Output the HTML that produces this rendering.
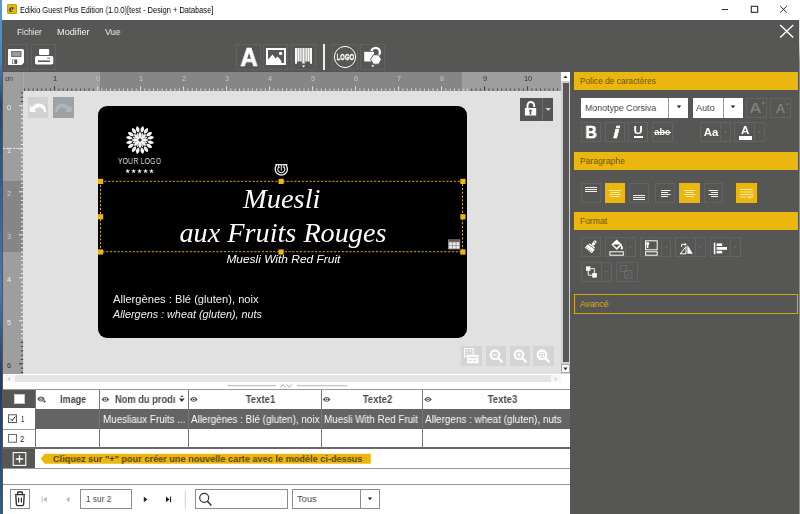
<!DOCTYPE html>
<html>
<head>
<meta charset="utf-8">
<title>Edikio Guest Plus Edition</title>
<style>
*{box-sizing:border-box;margin:0;padding:0}
html,body{width:800px;height:514px;overflow:hidden}
body{position:relative;background:#fff;font-family:"Liberation Sans",sans-serif;font-size:10px;color:#222}
.a{position:absolute}
.t{position:absolute;white-space:nowrap;line-height:1;will-change:transform}
svg{position:absolute;overflow:visible}
.tb{position:absolute;border:1px solid #616161}
.pb{position:absolute;border:1px solid #636363}
.pb.y{background:#ebb60e;border-color:#ebb60e}
.dv{position:absolute;width:1px;background:#636363}
.vl{position:absolute;width:1px;background:#7a7a7a}
.hl{position:absolute;height:1px;background:#8a8a8a}
.cb{position:absolute;background:#fff;border:1px solid #555}
.wb{position:absolute;background:#fff;border:1px solid #8c8c8c}

</style>
</head>
<body>
<div class="a" style="left:0px;top:0px;width:2px;height:514px;background:linear-gradient(#4f9bd8 0,#3f8ac9 60px,#1f4676 105px,#2a5f9c 180px,#3c7cc0 290px,#1d3c68 380px,#2c5e98 514px)"></div>
<div class="a" style="left:798.5px;top:0px;width:1.5px;height:514px;background:linear-gradient(#fff 0,#fff 19px,#dde5ee 20px,#cfdcea 45px,#5b9bd5 62px,#5b9bd5 514px)"></div>
<div class="a" style="left:2px;top:19.5px;width:796.5px;height:494.5px;background:#565655"></div>
<div class="a" style="left:6.5px;top:4px;width:10.5px;height:10px;background:#e3b51d;border:1px solid #c99d12;border-radius:1px"></div>
<div class="t" style="font-size:11px;color:#3b2d06;font-family:'Liberation Serif',serif;font-weight:bold;font-style:italic;left:9.25px;top:3.19px;">e</div>
<div class="t" style="font-size:8.6px;color:#000;left:20.40px;top:5.52px;transform:scaleX(0.8652);transform-origin:left center;">Edikio Guest Plus Edition (1.0.0)[test - Design + Database]</div>
<svg style="left:715px;top:0px" width="80" height="19" viewBox="0 0 80 19" ><path d="M6.7 9.5H13" stroke="#2a2a2a" stroke-width="1" fill="none"/><rect x="36.3" y="6.3" width="6.4" height="6" stroke="#2a2a2a" stroke-width="1.1" fill="none"/><path d="M65.2 6.1l6.6 6.4M71.8 6.1l-6.6 6.4" stroke="#2a2a2a" stroke-width="1" fill="none"/></svg>
<div class="t" style="font-size:9.2px;color:#f2f2f2;left:16.60px;top:27.91px;transform:scaleX(0.8993);transform-origin:left center;">Fichier</div>
<div class="t" style="font-size:9.2px;color:#f2f2f2;left:56.90px;top:27.91px;">Modifier</div>
<div class="t" style="font-size:9.2px;color:#f2f2f2;left:105.30px;top:27.91px;transform:scaleX(0.9553);transform-origin:left center;">Vue</div>
<svg style="left:778px;top:22px" width="18" height="18" viewBox="0 0 18 18" ><path d="M2.2 2.9l13 12.5M15.2 2.9L2.2 15.4" stroke="#fff" stroke-width="1.4" fill="none"/></svg>
<div class="tb" style="left:5.2px;top:44px;width:23.2px;height:26px;"></div>
<div class="tb" style="left:31px;top:44px;width:25.2px;height:26px;"></div>
<div class="tb" style="left:235.6px;top:44px;width:25px;height:26px;"></div>
<div class="tb" style="left:263.2px;top:44px;width:25.3px;height:26px;"></div>
<div class="tb" style="left:291.3px;top:44px;width:25.2px;height:26px;"></div>
<div class="tb" style="left:332px;top:44px;width:26px;height:26px;"></div>
<div class="tb" style="left:359.5px;top:44px;width:25.5px;height:26px;"></div>
<svg style="left:8px;top:48.7px" width="16" height="16" viewBox="0 0 16 16" ><path d="M0.8 0H14.5Q16 0 16 1.5V13.5L13.5 16H0.8Q0 16 0 15.2V0.8Q0 0 0.8 0Z" fill="#fff"/><rect x="3.6" y="2.4" width="9.4" height="5.2" fill="#9a9a9a" stroke="#5d5d5d" stroke-width="0.8"/><rect x="4" y="10.6" width="5.2" height="4.2" fill="#4a4a4a"/><rect x="4.6" y="11" width="1.8" height="3.6" fill="#fff"/></svg>
<svg style="left:35px;top:48.7px" width="19" height="16" viewBox="0 0 19 16" ><rect x="4" y="0" width="10.2" height="6" rx="0.8" fill="#fff"/><rect x="0" y="7" width="18.3" height="8.4" rx="1.6" fill="#fff"/><rect x="3" y="11.4" width="12" height="1.6" fill="#5a5a5a"/><rect x="12.2" y="8.6" width="3" height="1" fill="#6a6a6a"/></svg>
<div class="t" style="font-size:25px;color:#fff;font-weight:bold;left:239.67px;top:45.24px;transform:scaleX(0.9522);transform-origin:center center;-webkit-text-stroke:0.7px #fff;">A</div>
<svg style="left:266px;top:48px" width="20" height="17" viewBox="0 0 20 17" ><rect x="1" y="1" width="18" height="15" fill="none" stroke="#fff" stroke-width="2"/><path d="M2 15V11.5L6.5 6.5L9.6 10.4L11.6 8.4L15.5 13V15Z" fill="#fff"/><circle cx="14.6" cy="5.4" r="1.7" fill="#fff"/></svg>
<svg style="left:295px;top:48px" width="17" height="20" viewBox="0 0 17 20" ><path d="M0 0H17V15.8H15V13.4H10.2V15.6H6.8V13.4H2V15.8H0Z" fill="#f6f6f6"/><path d="M2.4 0V15.6" stroke="#565655" stroke-width="0.55" opacity="0.75"/><path d="M4.6 0V15.6" stroke="#565655" stroke-width="0.55" opacity="0.75"/><path d="M6.2 0V15.6" stroke="#565655" stroke-width="0.55" opacity="0.75"/><path d="M7.6 0V15.6" stroke="#565655" stroke-width="0.55" opacity="0.75"/><path d="M9.4 0V15.6" stroke="#565655" stroke-width="0.55" opacity="0.75"/><path d="M10.8 0V15.6" stroke="#565655" stroke-width="0.55" opacity="0.75"/><path d="M12.4 0V15.6" stroke="#565655" stroke-width="0.55" opacity="0.75"/><path d="M14.6 0V15.6" stroke="#565655" stroke-width="0.55" opacity="0.75"/><path d="M6.9 17.4H10.3L8.6 19.6Z" fill="#fff"/></svg>
<div class="a" style="left:323.3px;top:44px;width:1.7px;height:25.5px;background:#ececec"></div>
<svg style="left:332px;top:44px" width="26" height="26" viewBox="0 0 26 26" ><circle cx="13" cy="13" r="10.6" fill="none" stroke="#fff" stroke-width="1"/></svg>
<div class="t" style="font-size:8.4px;color:#fff;font-weight:bold;left:332.66px;top:52.99px;transform:scaleX(0.6972);transform-origin:center center;-webkit-text-stroke:0.35px #fff;">LOGO</div>
<svg style="left:360px;top:44px" width="26" height="26" viewBox="0 0 26 26" ><rect x="4.2" y="7.8" width="9.8" height="9.7" fill="#fff"/><circle cx="15.6" cy="8.2" r="4.3" fill="none" stroke="#fff" stroke-width="2.4"/><rect x="3.4" y="7" width="11.4" height="11.4" fill="#565655"/><rect x="4.2" y="7.8" width="9.8" height="9.7" fill="#fff"/><path d="M10.6 15.5L13.3 10.8H18.7L21.4 15.5L18.7 20.2H13.3Z" fill="#fff" stroke="#565655" stroke-width="1"/><path d="M11.2 21.2H14.4L12.8 23.2Z" fill="#fff"/></svg>
<div class="a" style="left:2.6px;top:71.8px;width:558.4px;height:18.8px;background:#9e9e9e"></div>
<div class="a" style="left:100px;top:71.8px;width:362px;height:18.8px;background:#868686"></div>
<div class="a" style="left:2.6px;top:90.6px;width:20.6px;height:283.4px;background:#9e9e9e"></div>
<div class="a" style="left:2.6px;top:181px;width:20.6px;height:71px;background:#868686"></div>
<div class="a" style="left:23.2px;top:90.6px;width:537.8px;height:283.4px;background:#e1e1e1"></div>
<div class="a" style="left:23px;top:71.8px;width:0.6px;height:18.8px;background:#a8a8a8"></div>
<div class="t" style="font-size:7.6px;color:#3c3c3c;left:5.20px;top:74.97px;transform:scaleX(0.7704);transform-origin:left center;">cm</div>
<svg style="left:0px;top:0px" width="800" height="514" viewBox="0 0 800 514" shape-rendering="auto"><path d="M24.50 88.60V90.6M28.80 88.60V90.6M33.10 88.60V90.6M37.40 88.60V90.6M41.70 88.60V90.6M46.00 88.60V90.6M50.30 88.60V90.6M54.60 86.40V90.6M58.90 88.60V90.6M63.20 88.60V90.6M67.50 88.60V90.6M71.80 88.60V90.6M76.10 88.60V90.6M80.40 88.60V90.6M84.70 88.60V90.6M89.00 88.60V90.6M93.30 88.60V90.6M471.70 88.60V90.6M476.00 88.60V90.6M480.30 88.60V90.6M484.60 86.40V90.6M488.90 88.60V90.6M493.20 88.60V90.6M497.50 88.60V90.6M501.80 88.60V90.6M506.10 88.60V90.6M510.40 88.60V90.6M514.70 88.60V90.6M519.00 88.60V90.6M523.30 88.60V90.6M527.60 86.40V90.6M531.90 88.60V90.6M536.20 88.60V90.6M540.50 88.60V90.6M544.80 88.60V90.6M549.10 88.60V90.6M553.40 88.60V90.6M557.70 88.60V90.6" stroke="#3a3a3a" stroke-width="1" fill="none"/><path d="M97.60 86.40V90.6M101.90 88.60V90.6M106.20 88.60V90.6M110.50 88.60V90.6M114.80 88.60V90.6M119.10 88.60V90.6M123.40 88.60V90.6M127.70 88.60V90.6M132.00 88.60V90.6M136.30 88.60V90.6M140.60 86.40V90.6M144.90 88.60V90.6M149.20 88.60V90.6M153.50 88.60V90.6M157.80 88.60V90.6M162.10 88.60V90.6M166.40 88.60V90.6M170.70 88.60V90.6M175.00 88.60V90.6M179.30 88.60V90.6M183.60 86.40V90.6M187.90 88.60V90.6M192.20 88.60V90.6M196.50 88.60V90.6M200.80 88.60V90.6M205.10 88.60V90.6M209.40 88.60V90.6M213.70 88.60V90.6M218.00 88.60V90.6M222.30 88.60V90.6M226.60 86.40V90.6M230.90 88.60V90.6M235.20 88.60V90.6M239.50 88.60V90.6M243.80 88.60V90.6M248.10 88.60V90.6M252.40 88.60V90.6M256.70 88.60V90.6M261.00 88.60V90.6M265.30 88.60V90.6M269.60 86.40V90.6M273.90 88.60V90.6M278.20 88.60V90.6M282.50 88.60V90.6M286.80 88.60V90.6M291.10 88.60V90.6M295.40 88.60V90.6M299.70 88.60V90.6M304.00 88.60V90.6M308.30 88.60V90.6M312.60 86.40V90.6M316.90 88.60V90.6M321.20 88.60V90.6M325.50 88.60V90.6M329.80 88.60V90.6M334.10 88.60V90.6M338.40 88.60V90.6M342.70 88.60V90.6M347.00 88.60V90.6M351.30 88.60V90.6M355.60 86.40V90.6M359.90 88.60V90.6M364.20 88.60V90.6M368.50 88.60V90.6M372.80 88.60V90.6M377.10 88.60V90.6M381.40 88.60V90.6M385.70 88.60V90.6M390.00 88.60V90.6M394.30 88.60V90.6M398.60 86.40V90.6M402.90 88.60V90.6M407.20 88.60V90.6M411.50 88.60V90.6M415.80 88.60V90.6M420.10 88.60V90.6M424.40 88.60V90.6M428.70 88.60V90.6M433.00 88.60V90.6M437.30 88.60V90.6M441.60 86.40V90.6M445.90 88.60V90.6M450.20 88.60V90.6M454.50 88.60V90.6M458.80 88.60V90.6M463.10 88.60V90.6M467.40 88.60V90.6" stroke="#e4e4e4" stroke-width="1" fill="none"/></svg>
<div class="t" style="font-size:7.4px;color:#333;left:53.04px;top:75.14px;">1</div>
<div class="t" style="font-size:7.4px;color:#c6c6c6;left:96.04px;top:75.14px;">0</div>
<div class="t" style="font-size:7.4px;color:#c6c6c6;left:139.04px;top:75.14px;">1</div>
<div class="t" style="font-size:7.4px;color:#c6c6c6;left:182.04px;top:75.14px;">2</div>
<div class="t" style="font-size:7.4px;color:#c6c6c6;left:225.04px;top:75.14px;">3</div>
<div class="t" style="font-size:7.4px;color:#c6c6c6;left:268.04px;top:75.14px;">4</div>
<div class="t" style="font-size:7.4px;color:#c6c6c6;left:311.04px;top:75.14px;">5</div>
<div class="t" style="font-size:7.4px;color:#c6c6c6;left:354.04px;top:75.14px;">6</div>
<div class="t" style="font-size:7.4px;color:#c6c6c6;left:397.04px;top:75.14px;">7</div>
<div class="t" style="font-size:7.4px;color:#c6c6c6;left:440.04px;top:75.14px;">8</div>
<div class="t" style="font-size:7.4px;color:#333;left:483.04px;top:75.14px;">9</div>
<div class="t" style="font-size:7.4px;color:#333;left:523.98px;top:75.14px;">10</div>
<svg style="left:0px;top:0px" width="800" height="514" viewBox="0 0 800 514" ><path d="M20.90 92.90H23.2M20.90 97.20H23.2M20.90 101.50H23.2M20.90 342.30H23.2M20.90 346.60H23.2M20.90 350.90H23.2M20.90 355.20H23.2M20.90 359.50H23.2M19.00 363.80H23.2M20.90 368.10H23.2M20.90 372.40H23.2" stroke="#3a3a3a" stroke-width="1" fill="none"/><path d="M19.00 105.80H23.2M20.90 110.10H23.2M20.90 114.40H23.2M20.90 118.70H23.2M20.90 123.00H23.2M20.90 127.30H23.2M20.90 131.60H23.2M20.90 135.90H23.2M20.90 140.20H23.2M20.90 144.50H23.2M19.00 148.80H23.2M20.90 153.10H23.2M20.90 157.40H23.2M20.90 161.70H23.2M20.90 166.00H23.2M20.90 170.30H23.2M20.90 174.60H23.2M20.90 178.90H23.2M20.90 183.20H23.2M20.90 187.50H23.2M19.00 191.80H23.2M20.90 196.10H23.2M20.90 200.40H23.2M20.90 204.70H23.2M20.90 209.00H23.2M20.90 213.30H23.2M20.90 217.60H23.2M20.90 221.90H23.2M20.90 226.20H23.2M20.90 230.50H23.2M19.00 234.80H23.2M20.90 239.10H23.2M20.90 243.40H23.2M20.90 247.70H23.2M20.90 252.00H23.2M20.90 256.30H23.2M20.90 260.60H23.2M20.90 264.90H23.2M20.90 269.20H23.2M20.90 273.50H23.2M19.00 277.80H23.2M20.90 282.10H23.2M20.90 286.40H23.2M20.90 290.70H23.2M20.90 295.00H23.2M20.90 299.30H23.2M20.90 303.60H23.2M20.90 307.90H23.2M20.90 312.20H23.2M20.90 316.50H23.2M19.00 320.80H23.2M20.90 325.10H23.2M20.90 329.40H23.2M20.90 333.70H23.2M20.90 338.00H23.2" stroke="#f0f0f0" stroke-width="1" fill="none"/></svg>
<div class="t" style="font-size:7.4px;color:#f0f0f0;left:7.44px;top:103.54px;">0</div>
<div class="t" style="font-size:7.4px;color:#f0f0f0;left:7.44px;top:146.54px;">1</div>
<div class="t" style="font-size:7.4px;color:#d0d0d0;left:7.44px;top:189.54px;">2</div>
<div class="t" style="font-size:7.4px;color:#d0d0d0;left:7.44px;top:232.54px;">3</div>
<div class="t" style="font-size:7.4px;color:#f0f0f0;left:7.44px;top:275.54px;">4</div>
<div class="t" style="font-size:7.4px;color:#f0f0f0;left:7.44px;top:318.54px;">5</div>
<div class="t" style="font-size:7.4px;color:#333;left:7.44px;top:361.54px;">6</div>
<svg style="left:0px;top:0px" width="800" height="514" viewBox="0 0 800 514" ><path d="M3 148.4H23" stroke="#f4f4f4" stroke-width="1" stroke-dasharray="2 1.4" fill="none"/></svg>
<div class="a" style="left:97.6px;top:105.8px;width:369.5px;height:232px;background:#000;border-radius:9px"></div>
<svg style="left:140px;top:139.8px" width="1" height="1" viewBox="0 0 1 1" ><g fill="#f4f4f4"><path transform="rotate(0)" d="M0 -0.8 Q3.4 -4.7 0 -8.6 Q-3.4 -4.7 0 -0.8 Z"/><path transform="rotate(12)" d="M0 -7.4 Q3.6 -10.9 0 -14.4 Q-3.6 -10.9 0 -7.4 Z"/><path transform="rotate(-12)" d="M0 -7.4 Q3.6 -10.9 0 -14.4 Q-3.6 -10.9 0 -7.4 Z"/><path transform="rotate(22.5)" d="M0 -4.4 Q1.6 -6.3 0 -8.2 Q-1.6 -6.3 0 -4.4 Z"/><path transform="rotate(45)" d="M0 -0.8 Q3.4 -4.7 0 -8.6 Q-3.4 -4.7 0 -0.8 Z"/><path transform="rotate(57)" d="M0 -7.4 Q3.6 -10.9 0 -14.4 Q-3.6 -10.9 0 -7.4 Z"/><path transform="rotate(33)" d="M0 -7.4 Q3.6 -10.9 0 -14.4 Q-3.6 -10.9 0 -7.4 Z"/><path transform="rotate(67.5)" d="M0 -4.4 Q1.6 -6.3 0 -8.2 Q-1.6 -6.3 0 -4.4 Z"/><path transform="rotate(90)" d="M0 -0.8 Q3.4 -4.7 0 -8.6 Q-3.4 -4.7 0 -0.8 Z"/><path transform="rotate(102)" d="M0 -7.4 Q3.6 -10.9 0 -14.4 Q-3.6 -10.9 0 -7.4 Z"/><path transform="rotate(78)" d="M0 -7.4 Q3.6 -10.9 0 -14.4 Q-3.6 -10.9 0 -7.4 Z"/><path transform="rotate(112.5)" d="M0 -4.4 Q1.6 -6.3 0 -8.2 Q-1.6 -6.3 0 -4.4 Z"/><path transform="rotate(135)" d="M0 -0.8 Q3.4 -4.7 0 -8.6 Q-3.4 -4.7 0 -0.8 Z"/><path transform="rotate(147)" d="M0 -7.4 Q3.6 -10.9 0 -14.4 Q-3.6 -10.9 0 -7.4 Z"/><path transform="rotate(123)" d="M0 -7.4 Q3.6 -10.9 0 -14.4 Q-3.6 -10.9 0 -7.4 Z"/><path transform="rotate(157.5)" d="M0 -4.4 Q1.6 -6.3 0 -8.2 Q-1.6 -6.3 0 -4.4 Z"/><path transform="rotate(180)" d="M0 -0.8 Q3.4 -4.7 0 -8.6 Q-3.4 -4.7 0 -0.8 Z"/><path transform="rotate(192)" d="M0 -7.4 Q3.6 -10.9 0 -14.4 Q-3.6 -10.9 0 -7.4 Z"/><path transform="rotate(168)" d="M0 -7.4 Q3.6 -10.9 0 -14.4 Q-3.6 -10.9 0 -7.4 Z"/><path transform="rotate(202.5)" d="M0 -4.4 Q1.6 -6.3 0 -8.2 Q-1.6 -6.3 0 -4.4 Z"/><path transform="rotate(225)" d="M0 -0.8 Q3.4 -4.7 0 -8.6 Q-3.4 -4.7 0 -0.8 Z"/><path transform="rotate(237)" d="M0 -7.4 Q3.6 -10.9 0 -14.4 Q-3.6 -10.9 0 -7.4 Z"/><path transform="rotate(213)" d="M0 -7.4 Q3.6 -10.9 0 -14.4 Q-3.6 -10.9 0 -7.4 Z"/><path transform="rotate(247.5)" d="M0 -4.4 Q1.6 -6.3 0 -8.2 Q-1.6 -6.3 0 -4.4 Z"/><path transform="rotate(270)" d="M0 -0.8 Q3.4 -4.7 0 -8.6 Q-3.4 -4.7 0 -0.8 Z"/><path transform="rotate(282)" d="M0 -7.4 Q3.6 -10.9 0 -14.4 Q-3.6 -10.9 0 -7.4 Z"/><path transform="rotate(258)" d="M0 -7.4 Q3.6 -10.9 0 -14.4 Q-3.6 -10.9 0 -7.4 Z"/><path transform="rotate(292.5)" d="M0 -4.4 Q1.6 -6.3 0 -8.2 Q-1.6 -6.3 0 -4.4 Z"/><path transform="rotate(315)" d="M0 -0.8 Q3.4 -4.7 0 -8.6 Q-3.4 -4.7 0 -0.8 Z"/><path transform="rotate(327)" d="M0 -7.4 Q3.6 -10.9 0 -14.4 Q-3.6 -10.9 0 -7.4 Z"/><path transform="rotate(303)" d="M0 -7.4 Q3.6 -10.9 0 -14.4 Q-3.6 -10.9 0 -7.4 Z"/><path transform="rotate(337.5)" d="M0 -4.4 Q1.6 -6.3 0 -8.2 Q-1.6 -6.3 0 -4.4 Z"/></g></svg>
<div class="t" style="font-size:9px;color:#e2e2e2;left:111.19px;top:157.38px;transform:scaleX(0.7585);transform-origin:center center;letter-spacing:0.3px;">YOUR LOGO</div>
<svg style="left:0px;top:0px" width="800" height="514" viewBox="0 0 800 514" ><g fill="#eaeaea"><polygon points="127.70,168.70 128.32,170.35 130.08,170.43 128.70,171.52 129.17,173.22 127.70,172.25 126.23,173.22 126.70,171.52 125.32,170.43 127.08,170.35"/><polygon points="133.65,168.70 134.27,170.35 136.03,170.43 134.65,171.52 135.12,173.22 133.65,172.25 132.18,173.22 132.65,171.52 131.27,170.43 133.03,170.35"/><polygon points="139.60,168.70 140.22,170.35 141.98,170.43 140.60,171.52 141.07,173.22 139.60,172.25 138.13,173.22 138.60,171.52 137.22,170.43 138.98,170.35"/><polygon points="145.55,168.70 146.17,170.35 147.93,170.43 146.55,171.52 147.02,173.22 145.55,172.25 144.08,173.22 144.55,171.52 143.17,170.43 144.93,170.35"/><polygon points="151.50,168.70 152.12,170.35 153.88,170.43 152.50,171.52 152.97,173.22 151.50,172.25 150.03,173.22 150.50,171.52 149.12,170.43 150.88,170.35"/></g></svg>
<div class="t" style="font-size:27px;color:#fff;font-family:'Liberation Serif',serif;font-style:italic;left:245.05px;top:185.69px;transform:scaleX(1.0558);transform-origin:center center;">Muesli</div>
<div class="t" style="font-size:27px;color:#fff;font-family:'Liberation Serif',serif;font-style:italic;left:183.51px;top:220.09px;transform:scaleX(1.0455);transform-origin:center center;">aux Fruits Rouges</div>
<div class="t" style="font-size:11.4px;color:#fff;font-style:italic;left:229.01px;top:254.35px;transform:scaleX(1.0480);transform-origin:center center;">Muesli With Red Fruit</div>
<div class="t" style="font-size:10.6px;color:#f0f0f0;left:113.00px;top:293.53px;transform:scaleX(1.0521);transform-origin:left center;">Allergènes : Blé (gluten), noix</div>
<div class="t" style="font-size:10.6px;color:#f0f0f0;font-style:italic;left:113.00px;top:309.33px;transform:scaleX(1.0202);transform-origin:left center;">Allergens : wheat (gluten), nuts</div>
<svg style="left:0px;top:0px" width="800" height="514" viewBox="0 0 800 514" ><rect x="100.5" y="181.3" width="362" height="70.4" fill="none" stroke="#cfa626" stroke-width="1" stroke-dasharray="2.2 1.6"/><rect x="98" y="178.8" width="5.2" height="5.2" fill="#ecb60e"/><rect x="278.5" y="178.8" width="5.2" height="5.2" fill="#ecb60e"/><rect x="460.3" y="178.8" width="5.2" height="5.2" fill="#ecb60e"/><rect x="98" y="214.2" width="5.2" height="5.2" fill="#ecb60e"/><rect x="460.3" y="214.2" width="5.2" height="5.2" fill="#ecb60e"/><rect x="98" y="249.4" width="5.2" height="5.2" fill="#ecb60e"/><rect x="278.5" y="249.4" width="5.2" height="5.2" fill="#ecb60e"/><rect x="460.3" y="249.4" width="5.2" height="5.2" fill="#ecb60e"/><g fill="none" stroke="#f2f2f2"><path d="M276.6 165.2A6.1 6.1 0 1 0 286 165.2" stroke-width="1.3"/><path d="M275.2 164.7H287.4" stroke-width="1.3"/><path d="M279 166.6A3.5 3.5 0 1 0 283.6 166.6" stroke-width="1.1"/><path d="M281.3 165v5.6M278.4 165.4l1 2.2M284.2 165.4l-1 2.2" stroke-width="1"/></g><g><rect x="448" y="239.4" width="12.2" height="10" fill="#8e8e8e"/><rect x="448.8" y="240" width="10.6" height="1.6" fill="#5a5a5a"/><rect x="449.2" y="242.4" width="2.9" height="2.7" fill="#ececec"/><rect x="452.8" y="242.4" width="2.9" height="2.7" fill="#ececec"/><rect x="456.4" y="242.4" width="2.9" height="2.7" fill="#ececec"/><rect x="449.2" y="245.8" width="2.9" height="2.7" fill="#ececec"/><rect x="452.8" y="245.8" width="2.9" height="2.7" fill="#ececec"/><rect x="456.4" y="245.8" width="2.9" height="2.7" fill="#ececec"/></g></svg>
<div class="a" style="left:27.6px;top:97.4px;width:20.4px;height:20.3px;background:#d1d1d1"></div>
<div class="a" style="left:53.2px;top:97.4px;width:20.8px;height:20.3px;background:#9da2a7"></div>
<svg style="left:0px;top:0px" width="800" height="514" viewBox="0 0 800 514" ><path d="M29.8 105.2V112H36.6L34.4 109.8Q37.6 106.6 40.6 107.4Q43.6 108.4 44 112H46.2Q46.4 105.4 40.6 103.8Q35.6 102.8 32 107.4Z" fill="#fbfbfb"/><path transform="translate(101.4 0) scale(-1 1)" d="M29.8 105.2V112H36.6L34.4 109.8Q37.6 106.6 40.6 107.4Q43.6 108.4 44 112H46.2Q46.4 105.4 40.6 103.8Q35.6 102.8 32 107.4Z" fill="#b1b6bb"/></svg>
<div class="a" style="left:520px;top:97.6px;width:33.4px;height:23.2px;background:#555"></div>
<div class="a" style="left:541.8px;top:97.6px;width:0.8px;height:23.2px;background:#6e6e6e"></div>
<svg style="left:520px;top:97.6px" width="34" height="23" viewBox="0 0 34 23" ><rect x="4.9" y="10" width="11.3" height="7.6" rx="0.6" fill="#fff"/><path d="M7.5 10.4V7.4A3.35 3.35 0 0 1 14.2 7.4V9" fill="none" stroke="#fff" stroke-width="1.9"/><circle cx="10.5" cy="12.8" r="1.3" fill="#555"/><path d="M9.9 13L11.1 13L11.5 16.4H9.5Z" fill="#555"/><path d="M25.4 10H31L28.2 12.9Z" fill="#d4d4d4"/></svg>
<div class="a" style="left:461.4px;top:346px;width:20.6px;height:20px;background:#d4d4d4"></div>
<div class="a" style="left:485.5px;top:346px;width:20.3px;height:20px;background:#d4d4d4"></div>
<div class="a" style="left:509.5px;top:346px;width:20.3px;height:20px;background:#d4d4d4"></div>
<div class="a" style="left:533.2px;top:346px;width:20.6px;height:20px;background:#d4d4d4"></div>
<svg style="left:461.4px;top:346px" width="21" height="20" viewBox="0 0 21 20" ><rect x="3.6" y="2.6" width="8.6" height="8" fill="none" stroke="#fbfbfb" stroke-width="1.2"/><path d="M5.4 5.2h1.6M8.4 5.2h2M5.4 7.6h1.4" stroke="#fbfbfb" stroke-width="1"/><rect x="6.2" y="8.8" width="11.4" height="8.6" fill="#fbfbfb"/><path d="M7.6 11.4h8.6M8 14.4h2.6M12.2 14.4h3" stroke="#d4d4d4" stroke-width="1"/></svg>
<svg style="left:485.5px;top:346px" width="21" height="20" viewBox="0 0 21 20" ><g fill="none" stroke="#fcfcfc"><circle cx="9" cy="8.8" r="4.3" stroke-width="2.3"/><path d="M12.4 12.2L15.8 15.6" stroke-width="2.5" stroke-linecap="round"/><path d="M7.2 8.8h3.6" stroke-width="1.3"/></g></svg>
<svg style="left:509.5px;top:346px" width="21" height="20" viewBox="0 0 21 20" ><g fill="none" stroke="#fcfcfc"><circle cx="9" cy="8.8" r="4.3" stroke-width="2.3"/><path d="M12.4 12.2L15.8 15.6" stroke-width="2.5" stroke-linecap="round"/><path d="M7.2 8.8h3.6M9 7v3.6" stroke-width="1.3"/></g></svg>
<svg style="left:533.2px;top:346px" width="21" height="20" viewBox="0 0 21 20" ><g fill="none" stroke="#fcfcfc"><circle cx="9" cy="8.8" r="4.3" stroke-width="2.3"/><path d="M12.4 12.2L15.8 15.6" stroke-width="2.5" stroke-linecap="round"/><rect x="7.4" y="7.2" width="3.2" height="3.2" stroke-width="0.9"/></g></svg>
<div class="a" style="left:561px;top:71.8px;width:9px;height:302.2px;background:#cfcfcf"></div>
<div class="a" style="left:561px;top:71.8px;width:9px;height:9.6px;background:#fff"></div>
<div class="a" style="left:561px;top:364px;width:9px;height:9.4px;background:#fff;border:0.6px solid #aaa"></div>
<div class="a" style="left:563px;top:83px;width:5.6px;height:278.6px;background:#585858"></div>
<svg style="left:561px;top:71.8px" width="9" height="10" viewBox="0 0 9 10" ><path d="M2.4 6L4.5 3.4L6.6 6Z" fill="#333"/></svg>
<svg style="left:561px;top:364px" width="9" height="10" viewBox="0 0 9 10" ><path d="M2.4 3.6L4.5 6.2L6.6 3.6Z" fill="#222"/></svg>
<div class="a" style="left:2.6px;top:374px;width:567.4px;height:15.4px;background:#fff"></div>
<div class="a" style="left:2.6px;top:374.6px;width:558px;height:7.8px;background:#e4e4e4"></div>
<div class="a" style="left:2.6px;top:374.6px;width:12px;height:7.8px;background:#f6f6f6"></div>
<div class="a" style="left:551px;top:374.6px;width:9.6px;height:7.8px;background:#f6f6f6"></div>
<svg style="left:3px;top:374.6px" width="12" height="8" viewBox="0 0 12 8" ><path d="M6.8 2L4.4 3.9L6.8 5.8Z" fill="#c8c8c8"/></svg>
<svg style="left:551px;top:374.6px" width="10" height="8" viewBox="0 0 10 8" ><path d="M3.8 2L6.2 3.9L3.8 5.8Z" fill="#c8c8c8"/></svg>
<svg style="left:0px;top:0px" width="800" height="514" viewBox="0 0 800 514" ><path d="M227.5 385.7H276M297 385.7H347" stroke="#c4c4c4" stroke-width="1.2"/><path d="M280.4 387.2l2.6-2.6l2.6 2.6M286.6 384.6l2.6 2.6l2.6-2.6" fill="none" stroke="#888" stroke-width="0.8"/></svg>
<div class="a" style="left:574px;top:71.8px;width:224px;height:18.4px;background:#ebb60e"></div>
<div class="t" style="font-size:9.3px;color:#63521a;left:580.20px;top:76.83px;transform:scaleX(0.9022);transform-origin:left center;">Police de caractères</div>
<div class="a" style="left:574px;top:151.8px;width:224px;height:18px;background:#ebb60e"></div>
<div class="t" style="font-size:9.3px;color:#63521a;left:580.20px;top:157.03px;transform:scaleX(0.9260);transform-origin:left center;">Paragraphe</div>
<div class="a" style="left:574px;top:211.8px;width:224px;height:18.4px;background:#ebb60e"></div>
<div class="t" style="font-size:9.3px;color:#63521a;left:580.20px;top:217.13px;transform:scaleX(0.9337);transform-origin:left center;">Format</div>
<div class="a" style="left:574px;top:294px;width:224px;height:19.8px;border:1px solid #d9a811"></div>
<div class="t" style="font-size:9.3px;color:#e3b21a;left:580.20px;top:299.73px;transform:scaleX(0.9240);transform-origin:left center;">Avancé</div>
<div class="a" style="left:581px;top:97.8px;width:107.4px;height:19.8px;background:#fff"></div>
<div class="a" style="left:668.4px;top:97.8px;width:0.8px;height:19.8px;background:#9a9a9a"></div>
<div class="t" style="font-size:9.6px;color:#3e3e3e;left:584.60px;top:103.07px;transform:scaleX(0.9208);transform-origin:left center;">Monotype Corsiva</div>
<svg style="left:674px;top:103px" width="10" height="8" viewBox="0 0 10 8" ><path d="M2.8 2.6H7.2L5 5.2Z" fill="#222"/></svg>
<div class="a" style="left:692.6px;top:97.8px;width:50.4px;height:19.8px;background:#fff"></div>
<div class="a" style="left:722.6px;top:97.8px;width:0.8px;height:19.8px;background:#9a9a9a"></div>
<div class="t" style="font-size:9.6px;color:#3e3e3e;left:696.20px;top:103.07px;transform:scaleX(0.9468);transform-origin:left center;">Auto</div>
<svg style="left:728.2px;top:103px" width="10" height="8" viewBox="0 0 10 8" ><path d="M2.8 2.6H7.2L5 5.2Z" fill="#222"/></svg>
<div class="pb" style="left:746px;top:97.6px;width:21px;height:20.2px;"></div>
<div class="pb" style="left:770.4px;top:97.6px;width:21px;height:20.2px;"></div>
<div class="t" style="font-size:15.4px;color:#7d7d7d;font-weight:bold;left:750.24px;top:100.36px;transform:scaleX(1.1146);transform-origin:center center;">A</div>
<div class="t" style="font-size:12.4px;color:#7d7d7d;font-weight:bold;left:776.12px;top:102.90px;transform:scaleX(1.0723);transform-origin:center center;">A</div>
<svg style="left:760.6px;top:100.6px" width="5" height="4" viewBox="0 0 5 4" ><path d="M0.6 2H4M2.3 0.4V3.6" stroke="#7d7d7d" stroke-width="0.9"/></svg>
<svg style="left:784.6px;top:101.8px" width="5" height="4" viewBox="0 0 5 4" ><path d="M0.6 2H4" stroke="#7d7d7d" stroke-width="0.9"/></svg>
<div class="pb" style="left:581.4px;top:122.2px;width:19.6px;height:19.8px;"></div>
<div class="pb" style="left:604.6px;top:122.2px;width:20px;height:19.8px;"></div>
<div class="pb" style="left:628.4px;top:122.2px;width:20px;height:19.8px;"></div>
<div class="pb" style="left:652.4px;top:122.2px;width:20.2px;height:19.8px;"></div>
<div class="t" style="font-size:17px;color:#fff;font-weight:bold;left:585.46px;top:123.61px;transform:scaleX(0.9445);transform-origin:center center;-webkit-text-stroke:0.6px #fff;">B</div>
<div class="t" style="font-size:17px;color:#fff;font-weight:bold;font-style:italic;left:613.83px;top:123.61px;transform:scaleX(1.3096);transform-origin:center center;-webkit-text-stroke:0.5px #fff;">i</div>
<div class="t" style="font-size:11.6px;color:#fff;font-weight:bold;left:634.21px;top:124.38px;transform:scaleX(1.0985);transform-origin:center center;">U</div>
<div class="a" style="left:633.6px;top:136px;width:9.6px;height:1.5px;background:#fff"></div>
<div class="t" style="font-size:8.4px;color:#fff;font-weight:bold;left:655.38px;top:128.29px;transform:scaleX(1.0944);transform-origin:center center;">abc</div>
<div class="a" style="left:653.8px;top:132.2px;width:17.6px;height:0.9px;background:#fff"></div>
<div class="pb" style="left:700px;top:122px;width:30.8px;height:20.4px;"></div>
<div class="dv" style="left:720px;top:122px;width:1px;height:20.4px;"></div>
<div class="t" style="font-size:11px;color:#fff;font-weight:bold;left:703.97px;top:127.29px;transform:scaleX(1.0382);transform-origin:center center;">Aa</div>
<svg style="left:723.4px;top:130px" width="5" height="4" viewBox="0 0 5 4" ><path d="M0.6 1H4.2L2.4 3Z" fill="#6c6c6c"/></svg>
<div class="pb" style="left:734.2px;top:122px;width:30.6px;height:20.4px;"></div>
<div class="dv" style="left:754px;top:122px;width:1px;height:20.4px;"></div>
<div class="t" style="font-size:11.6px;color:#fff;font-weight:bold;left:740.71px;top:123.88px;">A</div>
<div class="a" style="left:738.5px;top:136.3px;width:13.3px;height:4.2px;background:#fff"></div>
<svg style="left:757.4px;top:130px" width="5" height="4" viewBox="0 0 5 4" ><path d="M0.6 1H4.2L2.4 3Z" fill="#6c6c6c"/></svg>
<div class="pb " style="left:581.2px;top:183px;width:20px;height:20.4px;"></div>
<div class="pb y" style="left:604.6px;top:183px;width:20.6px;height:20.4px;"></div>
<div class="pb " style="left:628.6px;top:183px;width:20.4px;height:20.4px;"></div>
<div class="pb " style="left:655px;top:183px;width:20.2px;height:20.4px;"></div>
<div class="pb y" style="left:679.3px;top:183px;width:20.7px;height:20.4px;"></div>
<div class="pb " style="left:703.6px;top:183px;width:19.8px;height:20.4px;"></div>
<div class="pb y" style="left:736px;top:183px;width:21px;height:20.4px;"></div>
<svg style="left:0px;top:0px" width="800" height="514" viewBox="0 0 800 514" ><path d="M585 187.5H597M585 189.5H597M585 191.5H597" stroke="#f2f2f2" stroke-width="1" fill="none"/><path d="M609 190.5H621M610.4 192.5H619.6M609 194.5H621M610.4 196.5H619.6" stroke="#fbe9a6" stroke-width="1" fill="none"/><path d="M633 195.5H645M633 197.5H645M633 199.5H645" stroke="#f2f2f2" stroke-width="1" fill="none"/><path d="M661 190.5H670.5M661 192.5H668M661 194.5H670.5M661 196.5H668" stroke="#f2f2f2" stroke-width="1" fill="none"/><path d="M684.2 190.5H695.2M685.8 192.5H693.6M684.2 194.5H695.2M685.8 196.5H693.6" stroke="#fbe9a6" stroke-width="1" fill="none"/><path d="M708.6 190.5H718M711 192.5H718M708.6 194.5H718M711 196.5H718" stroke="#f2f2f2" stroke-width="1" fill="none"/><path d="M740.2 189.5H752.6M740.2 192H752.6M740.2 194.5H752.6M740.2 197H747" stroke="#fbe9a6" stroke-width="1" fill="none"/><path d="M752.2 194.4V197.2H749.2" fill="none" stroke="#fbe9a6" stroke-width="1"/><path d="M749.6 195.4L747.6 197.2L749.6 199Z" fill="#fbe9a6"/></svg>
<div class="pb" style="left:581.2px;top:237px;width:20.3px;height:20px;"></div>
<div class="pb" style="left:605.2px;top:237px;width:30.4px;height:20px;"></div>
<div class="dv" style="left:625.2px;top:237px;width:1px;height:20px;"></div>
<svg style="left:628.2px;top:245.4px" width="5" height="4" viewBox="0 0 5 4" ><path d="M0.6 1H4.2L2.4 3Z" fill="#6c6c6c"/></svg>
<div class="pb" style="left:640.2px;top:237px;width:31px;height:20px;"></div>
<div class="dv" style="left:661px;top:237px;width:1px;height:20px;"></div>
<svg style="left:664px;top:245.4px" width="5" height="4" viewBox="0 0 5 4" ><path d="M0.6 1H4.2L2.4 3Z" fill="#6c6c6c"/></svg>
<div class="pb" style="left:674.8px;top:237px;width:30.8px;height:20px;"></div>
<div class="dv" style="left:695px;top:237px;width:1px;height:20px;"></div>
<svg style="left:698px;top:245.4px" width="5" height="4" viewBox="0 0 5 4" ><path d="M0.6 1H4.2L2.4 3Z" fill="#6c6c6c"/></svg>
<div class="pb" style="left:709.6px;top:237px;width:31px;height:20px;"></div>
<div class="dv" style="left:729.6px;top:237px;width:1px;height:20px;"></div>
<svg style="left:732.6px;top:245.4px" width="5" height="4" viewBox="0 0 5 4" ><path d="M0.6 1H4.2L2.4 3Z" fill="#6c6c6c"/></svg>
<div class="pb" style="left:581.2px;top:261.6px;width:30.4px;height:20.2px;"></div>
<div class="dv" style="left:601px;top:261.6px;width:1px;height:20.2px;"></div>
<svg style="left:604px;top:270px" width="5" height="4" viewBox="0 0 5 4" ><path d="M0.6 1H4.2L2.4 3Z" fill="#6c6c6c"/></svg>
<div class="pb" style="left:615.6px;top:261.6px;width:22px;height:20.2px;"></div>
<svg style="left:0px;top:0px" width="800" height="514" viewBox="0 0 800 514" ><g transform="translate(591.4 246.6) rotate(38)"><rect x="-4.4" y="0.4" width="8.8" height="4.6" fill="#fff"/><path d="M-3 3v2M-1 3v2M1 3v2M3 3v2" stroke="#565655" stroke-width="0.6"/><rect x="-3.4" y="-1.6" width="6.8" height="1.4" fill="#fff"/><rect x="-1.4" y="-7.4" width="2.8" height="5.6" rx="1.2" fill="#fff"/><circle cx="0" cy="-5.6" r="0.7" fill="#565655"/></g><path d="M611.4 244.6L616.6 239.4L622 244.8L616.8 250Z" fill="#fff"/><path d="M613.2 244.4H620L616.6 247.8Z" fill="#565655"/><path d="M621.2 244.8Q623.8 247.6 622.6 249.2Q621.2 250.2 620.6 248.4Z" fill="#fff"/><rect x="609.9" y="251.8" width="13.4" height="3.4" fill="none" stroke="#fff" stroke-width="1"/><rect x="645.6" y="240.8" width="11.6" height="9" fill="none" stroke="#fff" stroke-width="1"/><circle cx="647.6" cy="243.6" r="1.7" fill="#fff"/><rect x="646.8" y="245" width="1.6" height="3" fill="#fff"/><rect x="645.6" y="251.8" width="11.6" height="3.4" fill="none" stroke="#fff" stroke-width="1"/><path d="M680.2 253.8H686L686 246.6Z" fill="none" stroke="#fff" stroke-width="1"/><path d="M687.4 253.8H692.8L687.4 245Z" fill="#fff"/><path d="M681.6 247V244.4H685" fill="none" stroke="#fff" stroke-width="1"/><path d="M684.6 242.8L686.8 244.4L684.6 246Z" fill="#fff"/><rect x="713.8" y="242.6" width="1.5" height="11.6" fill="#fff"/><rect x="716.6" y="243.4" width="5.6" height="2.6" fill="#fff"/><rect x="716.6" y="247" width="10.4" height="2.8" fill="#fff"/><rect x="716.6" y="250.8" width="5.6" height="2.6" fill="#fff"/><rect x="586" y="266.4" width="4.4" height="4.4" fill="#fff"/><rect x="592.2" y="273" width="4.6" height="4.6" fill="#fff"/><path d="M588.2 270.8V275.2H592.2M590.4 268.6H594.4V273" fill="none" stroke="#fff" stroke-width="0.9"/><g fill="none" stroke="#6e6e6e" stroke-width="0.9"><rect x="620.6" y="265.6" width="6" height="6"/><rect x="624.6" y="270.6" width="7.4" height="7.4"/><path d="M627 277.6v-3h3"/></g></svg>
<div class="a" style="left:2.6px;top:389.4px;width:567.4px;height:124.6px;background:#fff"></div>
<div class="a" style="left:2.6px;top:389px;width:567.4px;height:1px;background:#9a9a9a"></div>
<div class="a" style="left:2.6px;top:389.6px;width:32.4px;height:18.8px;background:#565655"></div>
<div class="a" style="left:14.4px;top:393.6px;width:10.4px;height:10px;background:#fff;border:1.2px solid #c9c9c9"></div>
<div class="a" style="left:35px;top:408.8px;width:535px;height:20.2px;background:#646464"></div>
<div class="a" style="left:35px;top:390px;width:1px;height:58px;background:#777"></div>
<div class="a" style="left:99.4px;top:390px;width:1px;height:58px;background:#777"></div>
<div class="a" style="left:188px;top:390px;width:1px;height:58px;background:#777"></div>
<div class="a" style="left:321px;top:390px;width:1px;height:58px;background:#777"></div>
<div class="a" style="left:422px;top:390px;width:1px;height:58px;background:#777"></div>
<div class="a" style="left:35px;top:408.8px;width:1px;height:20.2px;background:#646464"></div>
<div class="a" style="left:2.6px;top:428.6px;width:32.4px;height:0.8px;background:#9c9c9c"></div>
<div class="a" style="left:2.6px;top:447.4px;width:567.4px;height:1.2px;background:#6a6a6a"></div>
<div class="a" style="left:2.6px;top:448.6px;width:32.4px;height:19.4px;background:#565655"></div>
<div class="a" style="left:2.6px;top:468px;width:567.4px;height:1px;background:#9a9a9a"></div>
<div class="a" style="left:2.6px;top:484.2px;width:567.4px;height:1px;background:#9a9a9a"></div>
<div class="t" style="font-size:10px;color:#484848;font-weight:bold;left:59.80px;top:394.94px;transform:scaleX(0.9064);transform-origin:left center;">Image</div>
<div class="t" style="font-size:10px;color:#484848;font-weight:bold;left:115.00px;top:394.94px;transform:scaleX(0.9292);transform-origin:left center;">Nom du prodı</div>
<div class="t" style="font-size:10px;color:#484848;font-weight:bold;left:244.82px;top:394.94px;transform:scaleX(0.9531);transform-origin:center center;">Texte1</div>
<div class="t" style="font-size:10px;color:#484848;font-weight:bold;left:362.02px;top:394.94px;transform:scaleX(0.9531);transform-origin:center center;">Texte2</div>
<div class="t" style="font-size:10px;color:#484848;font-weight:bold;left:486.72px;top:394.94px;transform:scaleX(0.9531);transform-origin:center center;">Texte3</div>
<svg style="left:0px;top:0px" width="800" height="514" viewBox="0 0 800 514" ><path d="M37.1 399Q41 394.2 44.9 399Q41 403.8 37.1 399Z" fill="#555"/><circle cx="41" cy="399" r="1.55" fill="#fff"/><circle cx="41" cy="399" r="0.85" fill="#444"/><path d="M42.6 401.4h3.4M44.3 399.8v3.2" stroke="#666" stroke-width="0.9"/><path d="M101.5 399.4Q105.4 394.6 109.3 399.4Q105.4 404.2 101.5 399.4Z" fill="#555"/><circle cx="105.4" cy="399.4" r="1.55" fill="#fff"/><circle cx="105.4" cy="399.4" r="0.85" fill="#444"/><path d="M189.9 399.4Q193.8 394.6 197.7 399.4Q193.8 404.2 189.9 399.4Z" fill="#555"/><circle cx="193.8" cy="399.4" r="1.55" fill="#fff"/><circle cx="193.8" cy="399.4" r="0.85" fill="#444"/><path d="M322.7 399.4Q326.6 394.6 330.5 399.4Q326.6 404.2 322.7 399.4Z" fill="#555"/><circle cx="326.6" cy="399.4" r="1.55" fill="#fff"/><circle cx="326.6" cy="399.4" r="0.85" fill="#444"/><path d="M424.1 399.4Q428 394.6 431.9 399.4Q428 404.2 424.1 399.4Z" fill="#555"/><circle cx="428" cy="399.4" r="1.55" fill="#fff"/><circle cx="428" cy="399.4" r="0.85" fill="#444"/><path d="M178.8 398.4H184.8L181.8 401.9Z" fill="#3c3c3c"/><path d="M180.5 396.3h2.6" stroke="#3c3c3c" stroke-width="1.1"/><rect x="8.6" y="414.8" width="7.8" height="7.8" fill="#fff" stroke="#444" stroke-width="0.9"/><path d="M10.2 418.6l1.9 2l3.2-4" fill="none" stroke="#222" stroke-width="1"/><rect x="8.6" y="434.4" width="7.8" height="7.8" fill="#fff" stroke="#555" stroke-width="0.9"/><rect x="13.2" y="452.6" width="12.6" height="12.8" fill="none" stroke="#fff" stroke-width="1.1"/><path d="M15.8 459h7.4M19.5 455.2v7.6" stroke="#fff" stroke-width="1.4"/><path d="M40.6 458.8L44.8 453.8H370.8V463.8H44.8Z" fill="#ebb60e"/></svg>
<div class="t" style="font-size:9.4px;color:#222;left:20.60px;top:414.24px;transform:scaleX(0.6515);transform-origin:left center;">1</div>
<div class="t" style="font-size:9.4px;color:#222;left:20.40px;top:433.84px;transform:scaleX(0.8431);transform-origin:left center;">2</div>
<div class="t" style="font-size:10px;color:#fdfdfd;left:102.60px;top:414.74px;transform:scaleX(0.9819);transform-origin:left center;">Muesliaux Fruits ...</div>
<div class="t" style="font-size:10px;color:#fdfdfd;left:190.60px;top:414.74px;transform:scaleX(0.9830);transform-origin:left center;">Allergènes : Blé (gluten), noix</div>
<div class="t" style="font-size:10px;color:#fdfdfd;left:324.00px;top:414.74px;transform:scaleX(0.9835);transform-origin:left center;">Muesli With Red Fruit</div>
<div class="t" style="font-size:10px;color:#fdfdfd;left:424.60px;top:414.74px;transform:scaleX(0.9909);transform-origin:left center;">Allergens : wheat (gluten), nuts</div>
<div class="t" style="font-size:9.4px;color:#544210;font-weight:bold;left:52.60px;top:454.24px;transform:scaleX(0.9780);transform-origin:left center;">Cliquez sur "+" pour créer une nouvelle carte avec le modèle ci-dessus</div>
<div class="wb" style="left:10.2px;top:489.2px;width:19.8px;height:19.6px;"></div>
<svg style="left:10.2px;top:489.2px" width="20" height="20" viewBox="0 0 20 20" ><g fill="none" stroke="#2c2c2c" stroke-width="1.35"><path d="M5 5.6H15M7.6 5.4V3.8Q7.6 3 8.4 3H11.6Q12.4 3 12.4 3.8V5.4"/><path d="M5.8 6.2L6.4 15.4Q6.5 16.6 7.6 16.6H12.4Q13.5 16.6 13.6 15.4L14.2 6.2"/><path d="M8.6 8.8V13.6M11.4 8.8V13.6" stroke-width="1.2"/></g></svg>
<svg style="left:0px;top:0px" width="800" height="514" viewBox="0 0 800 514" ><g fill="#b9b9b9"><rect x="41.6" y="496.8" width="1" height="5.4"/><path d="M46.8 496.8L43.2 499.5L46.8 502.2Z"/><path d="M69.6 496.8L65.8 499.5L69.6 502.2Z"/></g><g fill="#222"><path d="M143.8 496.6L147.4 499.4L143.8 502.2Z"/><path d="M166 496.6L169.6 499.4L166 502.2Z"/><rect x="170" y="496.6" width="1.1" height="5.6"/></g><path d="M185.3 491V508.6" stroke="#d0d0d0" stroke-width="1"/></svg>
<div class="wb" style="left:80.2px;top:489.2px;width:51.4px;height:19.4px;"></div>
<div class="t" style="font-size:8.8px;color:#444;left:85.60px;top:494.95px;transform:scaleX(0.9440);transform-origin:left center;">1 sur 2</div>
<div class="wb" style="left:195.4px;top:489px;width:93px;height:20px;"></div>
<svg style="left:195.4px;top:489px" width="20" height="20" viewBox="0 0 20 20" ><circle cx="9.2" cy="8.8" r="4.5" fill="none" stroke="#333" stroke-width="1.2"/><path d="M12.4 12.2L16.4 16.4" stroke="#333" stroke-width="1.5"/></svg>
<div class="wb" style="left:292px;top:489px;width:88.2px;height:20px;"></div>
<div class="a" style="left:359.8px;top:489px;width:0.8px;height:20px;background:#8c8c8c"></div>
<div class="t" style="font-size:9.6px;color:#444;left:296.60px;top:494.27px;transform:scaleX(0.9672);transform-origin:left center;">Tous</div>
<svg style="left:365.4px;top:495px" width="10" height="8" viewBox="0 0 10 8" ><path d="M2.8 2.6H7.2L5 5.2Z" fill="#222"/></svg>
</body>
</html>
